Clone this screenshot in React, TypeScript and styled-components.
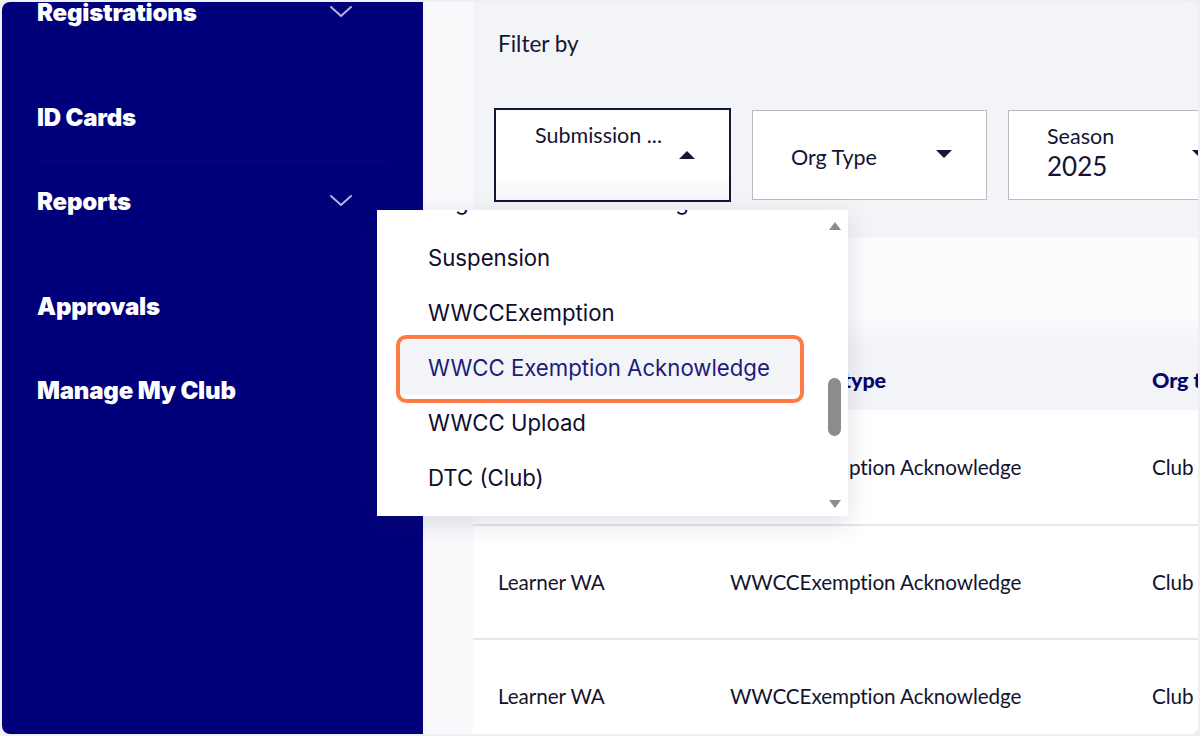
import React from "react";
import styled, { createGlobalStyle } from "styled-components";

const Global = createGlobalStyle`
  html, body { margin: 0; padding: 0; background: #eef0f4; }
  * { box-sizing: border-box; }
`;

const Frame = styled.div`
  position: relative;
  margin: 2px;
  width: 1196px;
  height: 732px;
  border-radius: 8px;
  overflow: hidden;
  display: flex;
  background: #f9fafc;
`;

const Sidebar = styled.nav`
  width: 421px;
  flex: none;
  background: #00007a;
  padding: 0 35px;
  display: flex;
  flex-direction: column;
`;

const NavList = styled.div`
  margin-top: -12px;
  display: flex;
  flex-direction: column;
`;

const NavItem = styled.div<{ $gap: number }>`
  height: 44px;
  flex: none;
  margin-top: ${(p) => p.$gap}px;
  display: flex;
  align-items: center;
  justify-content: space-between;
  color: #ffffff;
  font-family: Inter, "Noto Sans", sans-serif;
  font-weight: 900;
  font-size: 24px;
  letter-spacing: -0.2px;
  padding-right: 35px;
`;

const Divider = styled.div`
  height: 1px;
  flex: none;
  margin: 22px 0 17px 0;
  background: #0a0a5e;
`;

const Chevron = () => (
  <svg width="24" height="14" viewBox="0 0 24 14" fill="none">
    <path d="M2 2 L12 11 L22 2" stroke="#b4b4dc" strokeWidth="2" strokeLinecap="round" strokeLinejoin="round" />
  </svg>
);

const Main = styled.main`
  flex: 1;
  min-width: 0;
  padding-left: 50px;
  display: flex;
  flex-direction: column;
  overflow: hidden;
`;

const FilterCard = styled.section`
  height: 236px;
  flex: none;
  background: #f3f4f7;
  padding: 28px 0 0 21px;
  display: flex;
  flex-direction: column;
`;

const FilterTitle = styled.div`
  font-family: Lato, sans-serif;
  font-size: 22.5px;
  line-height: 30px;
  color: #141432;
  padding-left: 4px;
  height: 78px;
  margin-top: -1px;
`;

const FilterRow = styled.div`
  display: flex;
  gap: 21px;
  align-items: center;
  margin-top: 1px;
`;

const SelectBox = styled.div<{ $active?: boolean; $w: number }>`
  width: ${(p) => p.$w}px;
  flex: none;
  height: ${(p) => (p.$active ? 94 : 90)}px;
  border: ${(p) => (p.$active ? "2px solid #16163a" : "1px solid #b9bac2")};
  background: ${(p) => (p.$active ? "linear-gradient(#ffffff 70%, #f6f6fa)" : "#ffffff")};
  position: relative;
  padding: ${(p) => (p.$active ? "12px 0 0 39px" : "12px 0 0 38px")};
  font-family: Lato, sans-serif;
  color: #141432;
`;

const SelectLabel = styled.div<{ $center?: boolean }>`
  font-size: 21.5px;
  line-height: 26px;
  margin-top: ${(p) => (p.$center ? "21px" : "0")};
`;

const SelectValue = styled.div`
  font-size: 26px;
  line-height: 32px;
  margin-top: 1px;
`;

const Caret = styled.svg<{ $right: number; $top: number }>`
  position: absolute;
  right: ${(p) => p.$right}px;
  top: ${(p) => p.$top}px;
`;

const TableCard = styled.section`
  flex: 1;
  min-height: 0;
  background: #ffffff;
  display: flex;
  flex-direction: column;
  overflow: hidden;
`;

const TopBand = styled.div`
  height: 112px;
  flex: none;
  background: linear-gradient(#fcfcfd 70%, #f2f3f8);
`;

const Row = styled.div<{ $head?: boolean; $h: number }>`
  height: ${(p) => p.$h}px;
  flex: none;
  display: grid;
  grid-template-columns: 232px 422px 1fr;
  align-items: center;
  padding-left: 25px;
  background: ${(p) => (p.$head ? "#f3f4f7" : "#ffffff")};
  border-bottom: ${(p) => (p.$head ? "none" : "2px solid #e6e7eb")};
  font-family: Lato, sans-serif;
  font-size: ${(p) => (p.$head ? 21.5 : 20.7)}px;
  letter-spacing: -0.1px;
  color: ${(p) => (p.$head ? "#06066e" : "#14142e")};
  font-weight: ${(p) => (p.$head ? 900 : 400)};
  white-space: nowrap;
  overflow: hidden;
`;

const Dropdown = styled.div`
  position: absolute;
  left: 375px;
  top: 208px;
  width: 471px;
  height: 306px;
  background: #ffffff;
  box-shadow: 0 8px 24px rgba(40, 40, 90, 0.14);
  overflow: hidden;
  display: flex;
`;

const OptionList = styled.div`
  flex: 1;
  display: flex;
  flex-direction: column;
  padding: 0 0 0 20px;
  margin-top: -38px;
`;

const Option = styled.div<{ $selected?: boolean; $h: number }>`
  height: ${(p) => p.$h}px;
  flex: none;
  width: 406px;
  display: flex;
  align-items: center;
  padding-left: 31px;
  font-family: Inter, "Noto Sans", sans-serif;
  font-size: 22.2px;
  color: ${(p) => (p.$selected ? "#1c1c7c" : "#0e0e2e")};
  background: ${(p) => (p.$selected ? "#f3f4f7" : "transparent")};
  border-radius: 8px;
  position: relative;
  white-space: nowrap;
`;

const Highlight = styled.div`
  position: absolute;
  inset: -5px -1px -8px -1px;
  border: 4px solid #ff7b45;
  border-radius: 10px;
  pointer-events: none;
`;

const ScrollTrack = styled.div`
  width: 26px;
  flex: none;
  position: relative;
`;

const Thumb = styled.div`
  position: absolute;
  left: 6px;
  top: 168px;
  width: 13px;
  height: 58px;
  border-radius: 7px;
  background: #8c8c8c;
`;

const ScrollArrow = styled.svg<{ $top: number }>`
  position: absolute;
  left: 6px;
  top: ${(p) => p.$top}px;
`;

const options = ["Registration Acknowledgement", "Suspension", "WWCCExemption", "WWCC Exemption Acknowledge", "WWCC Upload", "DTC (Club)"];
const SELECTED = "WWCC Exemption Acknowledge";

const rows = [116, 114, 114];

export default function App() {
  return (
    <>
      <Global />
      <Frame>
        <Sidebar>
          <NavList>
            <NavItem $gap={0}>
              Registrations
              <Chevron />
            </NavItem>
            <NavItem $gap={61}>ID Cards</NavItem>
            <Divider />
            <NavItem $gap={0}>
              Reports
              <Chevron />
            </NavItem>
            <NavItem $gap={61}>Approvals</NavItem>
            <NavItem $gap={40}>Manage My Club</NavItem>
          </NavList>
        </Sidebar>
        <Main>
          <FilterCard>
            <FilterTitle>Filter by</FilterTitle>
            <FilterRow>
              <SelectBox $active $w={237}>
                <SelectLabel>Submission ...</SelectLabel>
                <Caret $right={33} $top={40} width="18" height="10" viewBox="0 0 18 10">
                  <path d="M1 9 L9 1 L17 9 Z" fill="#16163a" />
                </Caret>
              </SelectBox>
              <SelectBox $w={235}>
                <SelectLabel $center>Org Type</SelectLabel>
                <Caret $right={33} $top={38} width="18" height="10" viewBox="0 0 18 10">
                  <path d="M1 1 L9 9 L17 1 Z" fill="#16163a" />
                </Caret>
              </SelectBox>
              <SelectBox $w={235}>
                <SelectLabel>Season</SelectLabel>
                <SelectValue>2025</SelectValue>
                <Caret $right={33} $top={38} width="18" height="10" viewBox="0 0 18 10">
                  <path d="M1 1 L9 9 L17 1 Z" fill="#16163a" />
                </Caret>
              </SelectBox>
            </FilterRow>
          </FilterCard>
          <TableCard>
            <TopBand />
            <Row $head $h={60}>
              <span>Organisation</span>
              <span>Submission type</span>
              <span>Org type</span>
            </Row>
            {rows.map((h, i) => (
              <Row key={i} $h={h}>
                <span>Learner WA</span>
                <span>WWCCExemption Acknowledge</span>
                <span>Club</span>
              </Row>
            ))}
          </TableCard>
        </Main>
        <Dropdown>
          <OptionList>
            {options.map((o, i) => (
              <Option key={o} $h={i === 0 ? 58 : 55} $selected={o === SELECTED}>
                {o}
                {o === SELECTED && <Highlight />}
              </Option>
            ))}
          </OptionList>
          <ScrollTrack>
            <ScrollArrow $top={11} width="14" height="10" viewBox="0 0 14 10">
              <path d="M1 9 L7 1 L13 9 Z" fill="#8c8c8c" />
            </ScrollArrow>
            <Thumb />
            <ScrollArrow $top={289} width="14" height="10" viewBox="0 0 14 10">
              <path d="M1 1 L7 9 L13 1 Z" fill="#8c8c8c" />
            </ScrollArrow>
          </ScrollTrack>
        </Dropdown>
      </Frame>
    </>
  );
}
